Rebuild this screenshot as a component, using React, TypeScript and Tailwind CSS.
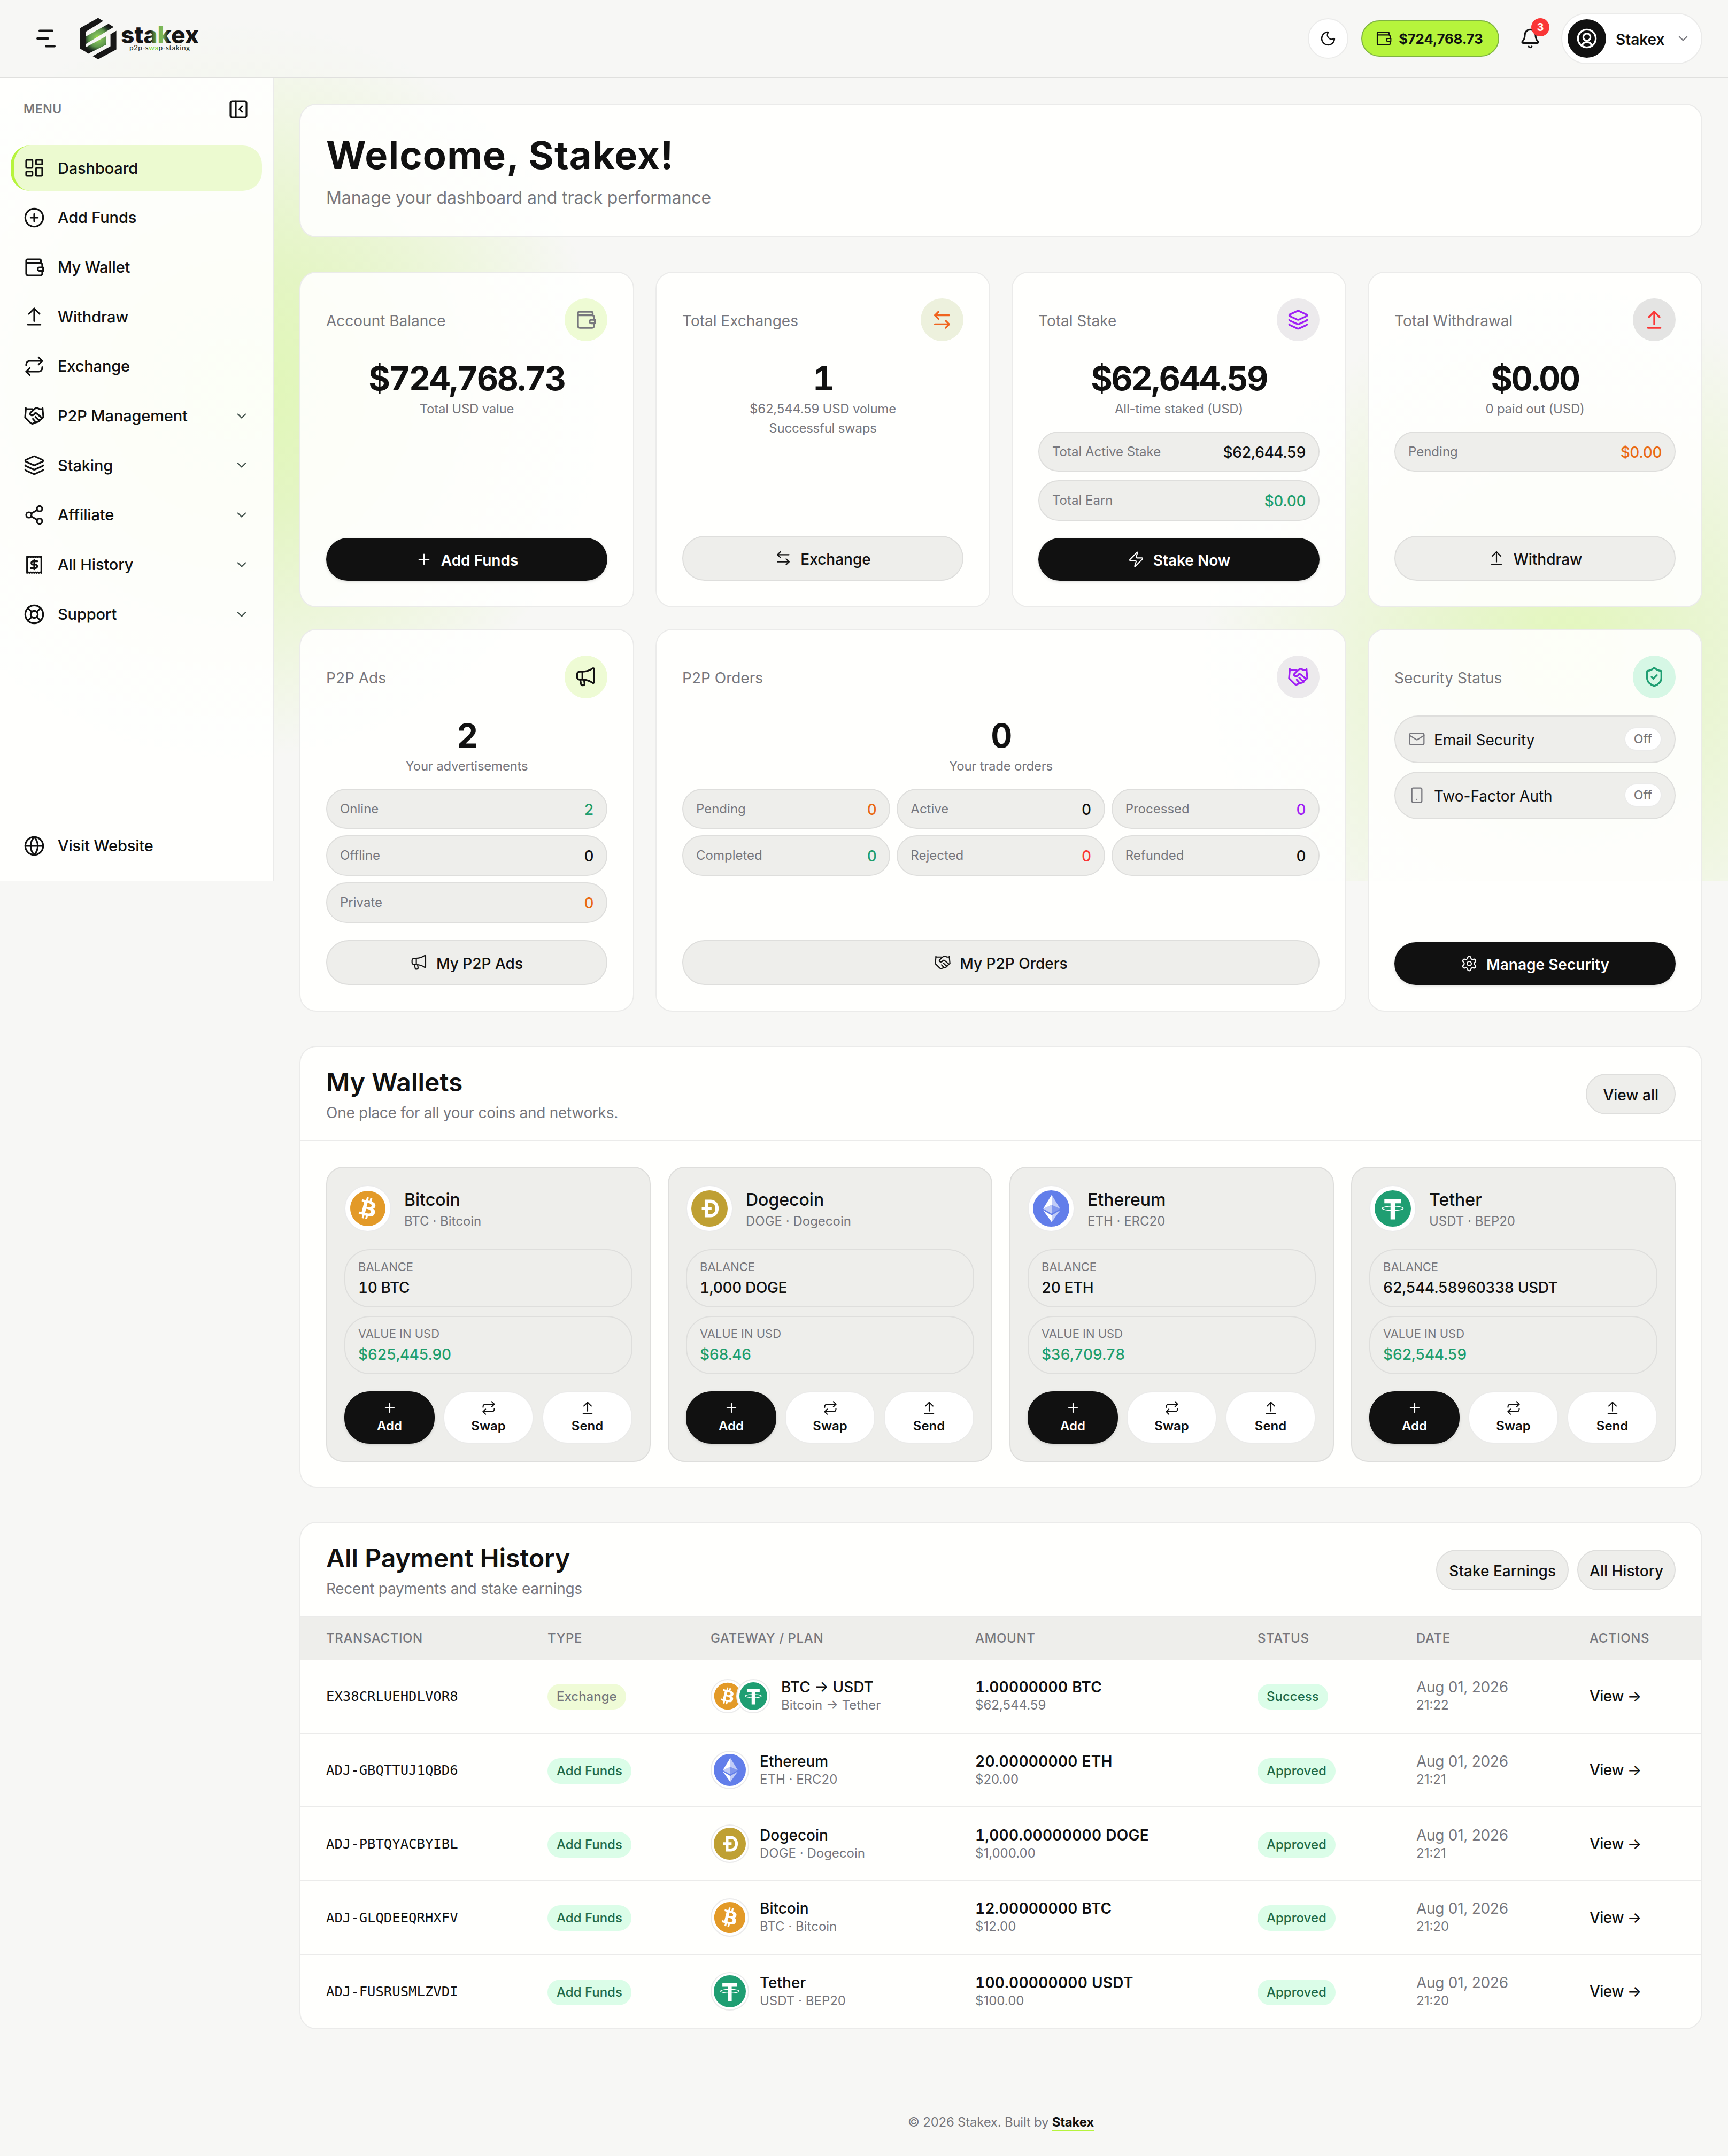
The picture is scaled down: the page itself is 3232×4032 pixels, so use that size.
import type { ComponentType, ReactNode, SVGProps } from 'react';
import {
  ArrowLeftRight,
  ArrowUpFromLine,
  Bell,
  ChevronDown,
  CirclePlus,
  Globe,
  Layers,
  LayoutDashboard,
  LifeBuoy,
  Mail,
  Moon,
  PanelLeftClose,
  Plus,
  Repeat,
  Settings,
  Share2,
  ShieldCheck,
  Smartphone,
  Zap,
} from 'lucide-react';
import { FaBitcoin } from 'react-icons/fa';

type IconProps = SVGProps<SVGSVGElement>;
type IconType = ComponentType<{ className?: string; strokeWidth?: number | string }>;
type Coin = 'btc' | 'doge' | 'eth' | 'usdt';

/* ---------- Icons ---------- */

function StrokeIcon({ children, ...props }: IconProps) {
  return (
    <svg
      viewBox="0 0 24 24"
      fill="none"
      stroke="currentColor"
      strokeWidth={2}
      strokeLinecap="round"
      strokeLinejoin="round"
      {...props}
    >
      {children}
    </svg>
  );
}

function WalletIcon(props: IconProps) {
  return (
    <StrokeIcon {...props}>
      <path d="M19.5 7V4.5A1.5 1.5 0 0 0 18 3H4.5A1.5 1.5 0 0 0 3 4.5V19a2 2 0 0 0 2 2h14a2 2 0 0 0 2-2v-3M3 7h16a2 2 0 0 1 2 2v3" />
      <path d="M22 12h-4a2 2 0 0 0 0 4h4z" />
    </StrokeIcon>
  );
}

function HandshakeIcon(props: IconProps) {
  return (
    <StrokeIcon {...props}>
      <path d="M2.6 3v1.3H10M21.4 3v1.3h-3.2l-1.7-.8a4 4 0 0 0-4.3.7L7.8 8.4a1.5 1.5 0 0 0 .4 2.4c1.4.7 2.9.2 3.8-.9l.9-1.1h1.4l6.2 5.1" />
      <path d="M2.6 4.3 1.8 13.6l5.9 5.9c1.1 1.1 2.5 1.5 3.6.5l5.7-1.7c1-.3 1.5-1.2 1.2-2.2 1.2-.1 2.3-.9 2.6-1.7l1.5-.9-.9-9.2" />
      <path d="m10.5 15.2 3.2 3.7M13.3 12.9l4 3.9" />
    </StrokeIcon>
  );
}

function ReceiptIcon(props: IconProps) {
  return (
    <StrokeIcon {...props}>
      <path d="M4 2.8c1 .9 1.7.9 2.7 0 1 .9 1.6.9 2.6 0 1 .9 1.7.9 2.7 0 1 .9 1.7.9 2.7 0 1 .9 1.6.9 2.6 0 1 .9 1.7.9 2.7 0v18.4c-1-.9-1.7-.9-2.7 0-1-.9-1.6-.9-2.6 0-1-.9-1.7-.9-2.7 0-1-.9-1.7-.9-2.7 0-1-.9-1.6-.9-2.6 0-1-.9-1.7-.9-2.7 0z" />
      <path d="M15.5 8.2h-4.8a1.9 1.9 0 0 0 0 3.8h2.8a1.9 1.9 0 0 1 0 3.8H8M12 6.8v10.4" />
    </StrokeIcon>
  );
}

function MegaphoneIcon(props: IconProps) {
  return (
    <StrokeIcon {...props}>
      <path d="M8 6H5a3 3 0 0 0-3 3v3a3 3 0 0 0 3 3h3c4.5 0 8 1.2 11.5 3.6.9.5 1.5 0 1.5-.9V3.3c0-.9-.6-1.4-1.5-.9C16 4.8 12.5 6 8 6zM8 6v9" />
      <path d="m5.5 15 .9 4.8c.5 2.3 4.3 1.9 4-.6L9.8 15" />
    </StrokeIcon>
  );
}

function MenuIcon(props: IconProps) {
  return (
    <StrokeIcon {...props}>
      <path d="M5 4.800h12M3 12h10M11 19.200h8" />
    </StrokeIcon>
  );
}

function AvatarIcon(props: IconProps) {
  return (
    <StrokeIcon {...props}>
      <circle cx="12" cy="12" r="10" />
      <circle cx="12" cy="10.5" r="4" />
      <path d="M6.500 20a5.800 5.800 0 0 1 11 0" />
    </StrokeIcon>
  );
}

function Logo() {
  return (
    <svg className="h-10 w-28 overflow-visible" viewBox="0 0 112 40" fill="none">
      <defs>
        <radialGradient id="logo-glow" gradientUnits="userSpaceOnUse" cx="17" cy="19.5" r="15">
          <stop offset="0" stopColor="#a8ee2d" />
          <stop offset=".25" stopColor="#7db85a" />
          <stop offset=".55" stopColor="#5f9a4c" />
          <stop offset=".8" stopColor="#243a26" />
          <stop offset="1" stopColor="#151515" />
        </radialGradient>
        <linearGradient id="logo-word" gradientUnits="userSpaceOnUse" x1="38" y1="0" x2="111" y2="0">
          <stop offset=".38" stopColor="#151515" />
          <stop offset=".46" stopColor="#6fae4c" />
          <stop offset=".54" stopColor="#7db85a" />
          <stop offset=".62" stopColor="#151515" />
        </linearGradient>
      </defs>
      <path
        fill="#171717"
        d="M17.2.7 22 3.6 6 13.5v16.3L8 33.9 0 29.2V10.5zM34.3 12.8v17.5L17.2 39.5l-5-3 16.6-9.3V16z"
      />
      <path fill="url(#logo-glow)" d="M27 6.3 31.8 9.2 5.6 25.2v-7zM25 17.7v7.9L8 34.2l-2.4-1.6V28.2z" />
      <text
        x="38.5"
        y="24.3"
        fontFamily="Inter, sans-serif"
        fontSize="22"
        fontWeight="800"
        textLength="73"
        lengthAdjust="spacingAndGlyphs"
        fill="url(#logo-word)"
      >
        stakex
      </text>
      <text
        x="46.5"
        y="30.9"
        fontFamily="Lato, sans-serif"
        fontSize="6.8"
        fontWeight="500"
        textLength="56.5"
        fill="#2b3a35"
      >
        p2p-s<tspan fill="#8fdc3a">wa</tspan>p-staking
      </text>
    </svg>
  );
}

function CoinLogo({ coin, className }: { coin: Coin; className?: string }) {
  if (coin === 'btc') {
    return <FaBitcoin className={className} color="#e39a28" />;
  }
  if (coin === 'doge') {
    return (
      <svg viewBox="0 0 32 32" className={className} fill="none">
        <circle cx="16" cy="16" r="16" fill="#bfa033" />
        <path d="M13.2 9.7h3.6c3.6 0 5.8 2.5 5.8 6.3s-2.2 6.3-5.8 6.3h-3.6zM9.2 16h8.6" stroke="#fff" strokeWidth="2.9" />
      </svg>
    );
  }
  if (coin === 'eth') {
    return (
      <svg viewBox="0 0 32 32" className={className}>
        <circle cx="16" cy="16" r="16" fill="#627eea" />
        <g fill="#fff">
          <path fillOpacity=".602" d="M16.498 4v8.87l7.497 3.35z" />
          <path d="M16.498 4 9 16.22l7.498-3.35z" />
          <path fillOpacity=".602" d="M16.498 21.968v6.027L24 17.616z" />
          <path d="M16.498 27.995v-6.028L9 17.616z" />
          <path fillOpacity=".2" d="m16.498 20.573 7.497-4.353-7.497-3.348z" />
          <path fillOpacity=".602" d="m9 16.22 7.498 4.353v-7.701z" />
        </g>
      </svg>
    );
  }
  return (
    <svg viewBox="0 0 32 32" className={className}>
      <circle cx="16" cy="16" r="16" fill="#1f9e72" />
      <path fill="#fff" d="M8.6 7.8h14.7v3.6h-5.4v14.2H14V11.4H8.6z" />
      <ellipse cx="16" cy="15.9" rx="9.3" ry="1.9" fill="none" stroke="#fff" strokeWidth=".7" />
    </svg>
  );
}

/* ---------- Shared pieces ---------- */

function CoinBadge({ coin, className }: { coin: Coin; className: string }) {
  return (
    <span className={`shrink-0 rounded-full border border-[#ebebeb] bg-white ${className}`}>
      <CoinLogo coin={coin} className="h-full w-full" />
    </span>
  );
}

function Panel({ className = '', children }: { className?: string; children: ReactNode }) {
  return (
    <section className={`rounded-2xl border border-[#ebebea] bg-[#fffffe]/90 ${className}`}>{children}</section>
  );
}

function ActionButton({ icon: Icon, label, dark }: { icon: IconType; label: string; dark?: boolean }) {
  return (
    <button
      className={`flex w-full items-center justify-center gap-2 rounded-full text-sm ${
        dark
          ? 'h-10 bg-[#111111] font-semibold text-white shadow-sm'
          : 'h-[42px] border border-[#dededc] bg-[#eeeeeb] font-medium text-[#111111]'
      }`}
    >
      <Icon className="h-4 w-4" strokeWidth={1.6} />
      <span className="mt-0.5">{label}</span>
    </button>
  );
}

function SmallButton({ className = 'px-[15px]', children }: { className?: string; children: ReactNode }) {
  return (
    <button
      className={`h-[38px] rounded-full border border-[#dededc] bg-[#eeeeeb] pt-0.5 text-sm font-medium text-[#111111] ${className}`}
    >
      {children}
    </button>
  );
}

function StatPill({ label, value, color = 'text-[#111111]' }: { label: string; value: string; color?: string }) {
  return (
    <div className="flex h-[37.8px] items-center justify-between rounded-full border border-[#dededc] bg-[#eeeeeb] px-3">
      <span className="text-xs text-[#77777d]">{label}</span>
      <span className={`mt-px text-sm font-medium tracking-[-0.02em] tabular-nums ${color}`}>{value}</span>
    </div>
  );
}

interface StatCardProps {
  title: string;
  icon: IconType;
  iconClass: string;
  value?: string;
  notes?: string[];
  className?: string;
  action: ReactNode;
  children?: ReactNode;
}

function StatCard({ title, icon: Icon, iconClass, value, notes = [], className = '', action, children }: StatCardProps) {
  return (
    <Panel className={`flex flex-col p-6 ${className}`}>
      <div className="mb-4 flex items-center justify-between">
        <span className="mt-0.5 text-sm text-[#77777d]">{title}</span>
        <span className={`flex h-10 w-10 items-center justify-center rounded-full ${iconClass}`}>
          <Icon className="h-5 w-5" strokeWidth={2} />
        </span>
      </div>
      {value && (
        <div className="mb-3 text-center">
          <div className="text-[31px] leading-[38.4px] font-bold tracking-[-0.04em] text-[#111111] tabular-nums">
            {value}
          </div>
          {notes.map((note) => (
            <div key={note} className="text-xs leading-[18px] tracking-[-0.01em] text-[#77777d]">
              {note}
            </div>
          ))}
        </div>
      )}
      {children}
      <div className="mt-auto pt-4">{action}</div>
    </Panel>
  );
}

/* ---------- Header and sidebar ---------- */

function Header() {
  return (
    <header className="flex h-[73px] items-center justify-between border-b border-[#e0e0de] bg-[#f7f7f5]/60 pr-6 pl-8">
      <div className="flex items-center gap-[18.5px]">
        <MenuIcon className="h-6 w-6" />
        <Logo />
      </div>
      <div className="flex items-center">
        <button className="flex h-[38px] w-[38px] items-center justify-center rounded-full border border-[#ebebea] bg-white">
          <Moon className="h-4 w-4" strokeWidth={1.8} />
        </button>
        <div className="ml-3 flex h-[34px] items-center gap-1.5 rounded-full border border-[#7fb341] bg-[#b6f43c] px-3 text-[13px] font-bold">
          <WalletIcon className="h-4 w-4" strokeWidth={1.6} />
          <span className="w-[81px] tracking-[-0.01em]">$724,768.73</span>
        </div>
        <button className="relative ml-[19px] flex h-5 w-5 items-center justify-center">
          <Bell className="h-5 w-5" strokeWidth={1.9} />
          <span className="absolute -top-[9px] left-[11px] flex h-[17px] w-[17px] items-center justify-center rounded-full bg-[#fa3636] text-[10px] font-bold text-white">
            3
          </span>
        </button>
        <button className="ml-[19px] flex h-12 w-[132px] items-center rounded-full border border-[#ebebea] bg-white pl-[5px]">
          <span className="flex h-9 w-9 items-center justify-center rounded-full bg-[#111111] text-white">
            <AvatarIcon className="h-5 w-5" />
          </span>
          <span className="mt-0.5 ml-[9px] text-sm font-semibold">Stakex</span>
          <ChevronDown className="ml-2.5 h-3.5 w-3.5 text-[#77777d]" />
        </button>
      </div>
    </header>
  );
}

const menu: { label: string; icon: IconType; active?: boolean; nested?: boolean }[] = [
  { label: 'Dashboard', icon: LayoutDashboard, active: true },
  { label: 'Add Funds', icon: CirclePlus },
  { label: 'My Wallet', icon: WalletIcon },
  { label: 'Withdraw', icon: ArrowUpFromLine },
  { label: 'Exchange', icon: Repeat },
  { label: 'P2P Management', icon: HandshakeIcon, nested: true },
  { label: 'Staking', icon: Layers, nested: true },
  { label: 'Affiliate', icon: Share2, nested: true },
  { label: 'All History', icon: ReceiptIcon, nested: true },
  { label: 'Support', icon: LifeBuoy, nested: true },
];

function MenuItem({ label, icon: Icon, active, nested }: (typeof menu)[number]) {
  return (
    <a
      className={`flex h-[42.35px] items-center gap-3 rounded-[18px] border-l-[3px] pr-3 pl-[9px] text-[14.5px] font-medium ${
        active ? 'border-[#b6f43c] bg-[#ecfad0]' : 'border-transparent'
      }`}
    >
      <Icon className="h-5 w-5" strokeWidth={1.9} />
      <span className="flex-1 tracking-[-0.005em]">{label}</span>
      {nested && <ChevronDown className="h-3.5 w-3.5 text-[#3f4f49]" />}
    </a>
  );
}

function Sidebar() {
  return (
    <aside className="flex h-[751px] w-64 shrink-0 flex-col border-r border-[#ebebea] bg-[#fffffe]/90 px-2.5 pb-3">
      <div className="flex h-[58px] items-center justify-between px-3">
        <span className="text-[11.5px] font-semibold tracking-wide text-[#77777d]">MENU</span>
        <PanelLeftClose className="h-5 w-5" strokeWidth={1.9} />
      </div>
      <nav className="mt-[5px] flex flex-1 flex-col gap-1">
        {menu.map((item) => (
          <MenuItem key={item.label} {...item} />
        ))}
      </nav>
      <MenuItem label="Visit Website" icon={Globe} />
    </aside>
  );
}

/* ---------- Sections ---------- */

function SecurityRow({ icon: Icon, label }: { icon: IconType; label: string }) {
  return (
    <div className="flex h-[44.5px] items-center gap-2 rounded-full border border-[#dededc] bg-[#eeeeeb] px-3 text-sm">
      <Icon className="h-4 w-4 text-[#77777d]" strokeWidth={1.7} />
      <span className="mt-0.5 flex-1">{label}</span>
      <span className="flex h-[22px] items-center rounded-full border border-[#ebebea] bg-white px-2 text-[11.5px] font-medium text-[#77777d]">
        Off
      </span>
    </div>
  );
}

function StatsGrid() {
  return (
    <div className="mt-8 grid grid-cols-4 gap-5">
      <StatCard
        title="Account Balance"
        icon={WalletIcon}
        iconClass="bg-[#eefbd4] text-[#77777d]"
        value="$724,768.73"
        notes={['Total USD value']}
        action={<ActionButton icon={Plus} label="Add Funds" dark />}
      />
      <StatCard
        title="Total Exchanges"
        icon={ArrowLeftRight}
        iconClass="bg-[#edf1dd] text-[#f0641e]"
        value="1"
        notes={['$62,544.59 USD volume', 'Successful swaps']}
        action={<ActionButton icon={ArrowLeftRight} label="Exchange" />}
      />
      <StatCard
        title="Total Stake"
        icon={Layers}
        iconClass="bg-[#eceaec] text-[#a020f5]"
        value="$62,644.59"
        notes={['All-time staked (USD)']}
        action={<ActionButton icon={Zap} label="Stake Now" dark />}
      >
        <div className="flex flex-col gap-2">
          <StatPill label="Total Active Stake" value="$62,644.59" />
          <StatPill label="Total Earn" value="$0.00" color="text-[#1f9e6e]" />
        </div>
      </StatCard>
      <StatCard
        title="Total Withdrawal"
        icon={ArrowUpFromLine}
        iconClass="bg-[#e4e4e3] text-[#fa3636]"
        value="$0.00"
        notes={['0 paid out (USD)']}
        action={<ActionButton icon={ArrowUpFromLine} label="Withdraw" />}
      >
        <StatPill label="Pending" value="$0.00" color="text-[#ea6a12]" />
      </StatCard>
      <StatCard
        title="P2P Ads"
        icon={MegaphoneIcon}
        iconClass="bg-[#eefbd4] text-[#111111]"
        value="2"
        notes={['Your advertisements']}
        action={<ActionButton icon={MegaphoneIcon} label="My P2P Ads" />}
      >
        <div className="flex flex-col gap-1.5">
          <StatPill label="Online" value="2" color="text-[#1f9e6e]" />
          <StatPill label="Offline" value="0" />
          <StatPill label="Private" value="0" color="text-[#ea6a12]" />
        </div>
      </StatCard>
      <StatCard
        title="P2P Orders"
        className="col-span-2"
        icon={HandshakeIcon}
        iconClass="bg-[#eceaec] text-[#a020f5]"
        value="0"
        notes={['Your trade orders']}
        action={<ActionButton icon={HandshakeIcon} label="My P2P Orders" />}
      >
        <div className="grid grid-cols-3 gap-1.5">
          <StatPill label="Pending" value="0" color="text-[#ea6a12]" />
          <StatPill label="Active" value="0" />
          <StatPill label="Processed" value="0" color="text-[#a020f5]" />
          <StatPill label="Completed" value="0" color="text-[#1f9e6e]" />
          <StatPill label="Rejected" value="0" color="text-[#fa3636]" />
          <StatPill label="Refunded" value="0" />
        </div>
      </StatCard>
      <StatCard
        title="Security Status"
        icon={ShieldCheck}
        iconClass="bg-[#d6f7e5] text-[#1f9e72]"
        action={<ActionButton icon={Settings} label="Manage Security" dark />}
      >
        <div className="flex flex-col gap-2">
          <SecurityRow icon={Mail} label="Email Security" />
          <SecurityRow icon={Smartphone} label="Two-Factor Auth" />
        </div>
      </StatCard>
    </div>
  );
}

function SectionHeader({ title, subtitle, children }: { title: string; subtitle: string; children: ReactNode }) {
  return (
    <div className="flex items-center justify-between border-b border-[#ebebea] px-6 pt-4 pb-[15px]">
      <div>
        <h2 className="pt-px text-2xl leading-8 font-semibold">{title}</h2>
        <p className="mt-0.5 text-sm leading-[21px] tracking-[-0.01em] text-[#77777d]">{subtitle}</p>
      </div>
      <div className="flex gap-2">{children}</div>
    </div>
  );
}

const wallets: { coin: Coin; name: string; network: string; balance: string; usd: string }[] = [
  { coin: 'btc', name: 'Bitcoin', network: 'BTC · Bitcoin', balance: '10 BTC', usd: '$625,445.90' },
  { coin: 'doge', name: 'Dogecoin', network: 'DOGE · Dogecoin', balance: '1,000 DOGE', usd: '$68.46' },
  { coin: 'eth', name: 'Ethereum', network: 'ETH · ERC20', balance: '20 ETH', usd: '$36,709.78' },
  { coin: 'usdt', name: 'Tether', network: 'USDT · BEP20', balance: '62,544.58960338 USDT', usd: '$62,544.59' },
];

function WalletField({ label, value, color }: { label: string; value: string; color: string }) {
  return (
    <div className="flex h-[54.5px] flex-col justify-center rounded-3xl border border-[#dededc] px-3">
      <span className="pt-px text-[11px] leading-4 text-[#77777d]">{label}</span>
      <span className={`pt-px text-sm leading-[21px] font-medium tracking-[-0.015em] tabular-nums ${color}`}>
        {value}
      </span>
    </div>
  );
}

function WalletAction({ icon: Icon, label, dark }: { icon: IconType; label: string; dark?: boolean }) {
  return (
    <button
      className={`flex h-[49px] flex-col items-center justify-center gap-0.5 rounded-3xl border text-xs font-semibold ${
        dark ? 'border-[#111111] bg-[#111111] text-white shadow-sm' : 'border-[#ebebea] bg-white text-[#111111]'
      }`}
    >
      <Icon className="h-3.5 w-3.5" strokeWidth={1.8} />
      {label}
    </button>
  );
}

function Wallets() {
  return (
    <Panel className="mt-8">
      <SectionHeader title="My Wallets" subtitle="One place for all your coins and networks.">
        <SmallButton>View all</SmallButton>
      </SectionHeader>
      <div className="grid grid-cols-4 gap-4 px-6 pt-6 pb-[23px]">
        {wallets.map((wallet) => (
          <div key={wallet.coin} className="rounded-2xl border border-[#dededc] bg-[#eeeeeb] p-4">
            <div className="mb-4 flex items-center gap-3">
              <CoinBadge coin={wallet.coin} className="h-11 w-11 p-1" />
              <div className="pt-0.5">
                <div className="text-base leading-[22px] font-medium">{wallet.name}</div>
                <div className="text-xs leading-[18px] text-[#77777d]">{wallet.network}</div>
              </div>
            </div>
            <div className="flex flex-col gap-2">
              <WalletField label="BALANCE" value={wallet.balance} color="text-[#111111]" />
              <WalletField label="VALUE IN USD" value={wallet.usd} color="text-[#1f9e6e]" />
            </div>
            <div className="mt-4 grid grid-cols-3 gap-2">
              <WalletAction icon={Plus} label="Add" dark />
              <WalletAction icon={Repeat} label="Swap" />
              <WalletAction icon={ArrowUpFromLine} label="Send" />
            </div>
          </div>
        ))}
      </div>
    </Panel>
  );
}

const payments: {
  id: string;
  type: string;
  coins: Coin[];
  name: string;
  network: string;
  amount: string;
  usd: string;
  status: string;
  time: string;
}[] = [
  { id: 'EX38CRLUEHDLVOR8', type: 'Exchange', coins: ['btc', 'usdt'], name: 'BTC → USDT', network: 'Bitcoin → Tether', amount: '1.00000000 BTC', usd: '$62,544.59', status: 'Success', time: '21:22' },
  { id: 'ADJ-GBQTTUJ1QBD6', type: 'Add Funds', coins: ['eth'], name: 'Ethereum', network: 'ETH · ERC20', amount: '20.00000000 ETH', usd: '$20.00', status: 'Approved', time: '21:21' },
  { id: 'ADJ-PBTQYACBYIBL', type: 'Add Funds', coins: ['doge'], name: 'Dogecoin', network: 'DOGE · Dogecoin', amount: '1,000.00000000 DOGE', usd: '$1,000.00', status: 'Approved', time: '21:21' },
  { id: 'ADJ-GLQDEEQRHXFV', type: 'Add Funds', coins: ['btc'], name: 'Bitcoin', network: 'BTC · Bitcoin', amount: '12.00000000 BTC', usd: '$12.00', status: 'Approved', time: '21:20' },
  { id: 'ADJ-FUSRUSMLZVDI', type: 'Add Funds', coins: ['usdt'], name: 'Tether', network: 'USDT · BEP20', amount: '100.00000000 USDT', usd: '$100.00', status: 'Approved', time: '21:20' },
];

function Badge({ label }: { label: string }) {
  return (
    <span
      className={`inline-flex h-6 items-center rounded-full px-[8.5px] text-xs font-medium ${
        label === 'Exchange' ? 'bg-[#effbd6] text-[#77777d]' : 'bg-[#dbfde8] text-[#226b48]'
      }`}
    >
      {label}
    </span>
  );
}

function PaymentHistory() {
  return (
    <Panel className="mt-8 overflow-hidden">
      <SectionHeader title="All Payment History" subtitle="Recent payments and stake earnings">
        <SmallButton className="px-[11px]">Stake Earnings</SmallButton>
        <SmallButton className="px-[10.5px]">All History</SmallButton>
      </SectionHeader>
      <table className="w-full table-fixed text-left">
        <thead>
          <tr className="h-10 bg-[#eeeeeb] text-xs tracking-wide text-[#77777d]">
            <th className="w-[207px] px-6 font-medium">TRANSACTION</th>
            <th className="w-[152.5px] px-6 font-medium">TYPE</th>
            <th className="w-[247.5px] px-6 font-medium">GATEWAY / PLAN</th>
            <th className="w-[264px] px-6 font-medium">AMOUNT</th>
            <th className="w-[148.5px] px-6 font-medium">STATUS</th>
            <th className="w-[162px] px-6 font-medium">DATE</th>
            <th className="px-6 font-medium">ACTIONS</th>
          </tr>
        </thead>
        <tbody className="divide-y divide-[#ebebea]">
          {payments.map((payment) => (
            <tr key={payment.id} className="h-[68.9px] whitespace-nowrap">
              <td className="px-6 font-['DejaVu_Sans_Mono',monospace] text-[12.8px]">{payment.id}</td>
              <td className="px-6">
                <Badge label={payment.type} />
              </td>
              <td className="px-6">
                <div className="flex items-center gap-2.5">
                  <div className="flex">
                    {payment.coins.length > 1 ? (
                      <>
                        <CoinBadge coin={payment.coins[0]} className="h-8 w-8 p-0.5" />
                        <CoinBadge coin={payment.coins[1]} className="-ml-2 h-8 w-8 p-0.5" />
                      </>
                    ) : (
                      <CoinBadge coin={payment.coins[0]} className="h-9 w-9 p-0.5" />
                    )}
                  </div>
                  <div>
                    <div className="text-sm leading-[17.5px] font-medium">{payment.name}</div>
                    <div className="text-xs leading-4 text-[#77777d]">{payment.network}</div>
                  </div>
                </div>
              </td>
              <td className="px-6">
                <div className="text-sm leading-[17.5px] font-semibold tracking-[0.01em] tabular-nums">
                  {payment.amount}
                </div>
                <div className="text-xs leading-4 text-[#77777d]">{payment.usd}</div>
              </td>
              <td className="px-6">
                <Badge label={payment.status} />
              </td>
              <td className="px-6 text-[#77777d]">
                <div className="text-sm leading-[17.5px] tracking-[-0.01em]">Aug 01, 2026</div>
                <div className="text-xs leading-4">{payment.time}</div>
              </td>
              <td className="px-6 text-sm font-medium tracking-[-0.02em]">View →</td>
            </tr>
          ))}
        </tbody>
      </table>
    </Panel>
  );
}

export default function App() {
  return (
    <div className="h-[2016px] w-[1616px] bg-[#f7f7f5] bg-[radial-gradient(circle_at_220px_365px,#e0f7b6_0px,#e4f5c4_120px,#f7f7f500_345px),radial-gradient(circle_at_1465px_610px,#e3f7bc_0px,#e7f5cc_100px,#f7f7f500_340px)] bg-[length:1616px_824px] bg-no-repeat font-['Inter',sans-serif] text-[#111111] [zoom:2]">
      <Header />
      <div className="flex">
        <Sidebar />
        <main className="flex-1 px-6 pt-6">
          <Panel className="h-[125px] px-6 pt-[25px]">
            <h1 className="text-4xl leading-[44px] font-bold tracking-[0.017em]">Welcome, Stakex!</h1>
            <p className="mt-1.5 text-base leading-6 tracking-[-0.003em] text-[#77777d]">
              Manage your dashboard and track performance
            </p>
          </Panel>
          <StatsGrid />
          <Wallets />
          <PaymentHistory />
          <footer className="mt-[78px] text-center text-xs leading-[18px] tracking-[-0.01em] text-[#77777d]">
            © 2026 Stakex. Built by{' '}
            <a className="border-b border-[#b6f43c] font-bold text-[#111111]">Stakex</a>
          </footer>
        </main>
      </div>
    </div>
  );
}
